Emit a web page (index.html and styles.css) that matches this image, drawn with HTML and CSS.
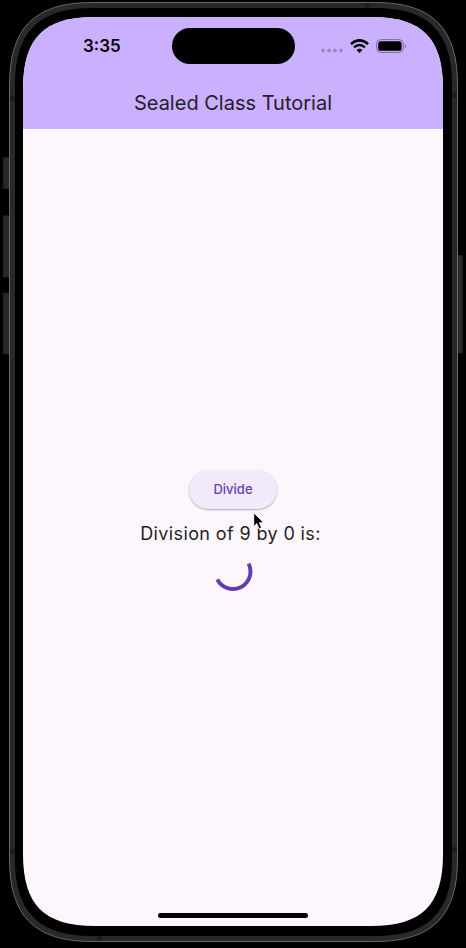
FILE: index.html
```
<!DOCTYPE html>
<html lang="en">
<head>
<meta charset="utf-8">
<title>Sealed Class Tutorial</title>
<link rel="stylesheet" href="styles.css">
</head>
<body>
<div class="device">
  <svg class="frame" viewBox="0 0 466 948" aria-hidden="true">
    <g fill="#292929" stroke="#202020">
      <rect x="3.2" y="157.5" width="7" height="31"/>
      <rect x="3.2" y="216" width="7" height="61"/>
      <rect x="3.2" y="293" width="7" height="61"/>
      <rect x="457" y="255.5" width="5.3" height="97.5"/>
    </g>
    <path fill="#292929" stroke="#686868" d="M9.500 84.500C9.500 28 35 2.500 91.500 2.500H375.500C432 2.500 457.500 28 457.500 84.500V859.500C457.500 916 432 941.500 375.500 941.500H91.500C35 941.500 9.500 916 9.500 859.500Z"/>
    <path fill="#1d1d1d" d="M10 96h5v5h-5zM10 849h5v5h-5zM365 3h5v5h-5zM452 93h5v5h-5zM452 847h5v5h-5zM97 936h5v5h-5z"/>
    <path fill="#000" d="M15 84C15 32 39 8 91 8H376C428 8 452 32 452 84V860C452 912 428 936 376 936H91C39 936 15 912 15 860Z"/>
  </svg>
  <main class="screen">
    <header class="app-bar">
      <div class="status-bar">
        <span class="time">3:35</span>
        <span class="island"></span>
        <span class="status-icons">
          <svg width="22" height="5" viewBox="0 0 22 5" fill="#a088c8"><circle cx="2" cy="2.5" r="2"/><circle cx="8" cy="2.500" r="2"/><circle cx="14" cy="2.500" r="2"/><circle cx="20" cy="2.500" r="2"/></svg>
          <svg class="wifi" width="19" height="14" viewBox="0 0 19 14"><g fill="none" stroke="#000" stroke-width="2.500"><path d="M.9 5.100Q9.500-2.400 18.100 5.100"/><path d="M4 8.400Q9.500 3.700 15 8.400"/></g><path d="M6.500 11Q9.500 8.600 12.500 11L9.500 14Z"/></svg>
          <svg class="battery" width="31" height="14" viewBox="0 0 31 14"><rect x=".6" y=".6" width="26.600" height="12.800" rx="4" fill="none" stroke="#7d6a9e"/><rect x="2.200" y="2.200" width="23.400" height="9.600" rx="2.600"/><path d="M28.800 4.800Q31.300 7 28.800 9.200Z" fill="#7d6a9e"/></svg>
        </span>
      </div>
      <h1 class="title">Sealed Class Tutorial</h1>
    </header>
    <section class="content">
      <button class="divide">Divide</button>
      <p class="message">Division of 9 by 0 is:</p>
      <svg class="spinner" width="40" height="40" viewBox="0 0 40 40"><path d="M35.600 9.700A17.200 17.200 0 1 1 4.300 25.300" fill="none" stroke="#613bb3" stroke-width="3.900"/></svg>
    </section>
    <div class="home-indicator"></div>
  </main>
  <svg class="cursor" width="12" height="18" viewBox="0 0 12 18"><path d="M.7.8V14.700L3.800 11.700L6 16.900L8.600 15.800L6.400 10.800H11Z" stroke="#fff" stroke-width="1"/></svg>
</div>
</body>
</html>
```
FILE: styles.css
```
* { box-sizing: border-box; }
body {
  margin: 0;
  background: #000;
  font-family: Inter, "Liberation Sans", sans-serif;
}
.device {
  position: relative;
  width: 466px;
  height: 948px;
  padding: 17px 23px 22px;
  overflow: hidden;
}
.frame {
  position: absolute;
  inset: 0;
  width: 466px;
  height: 948px;
}
.screen {
  position: relative;
  display: flex;
  flex-direction: column;
  width: 420px;
  height: 909px;
  background: #fdf7fd;
  clip-path: path("M0 72C0 21 21 0 72 0H348C399 0 420 21 420 72V837C420 888 399 909 348 909H72C21 909 0 888 0 837Z");
}
.app-bar {
  height: 112px;
  background: #cab0fe;
}
.status-bar {
  display: grid;
  grid-template-columns: 148.500px 123px 148.500px;
  align-items: center;
  height: 58px;
}
.time {
  padding-left: 60px;
  font-size: 17px;
  font-weight: 600;
  line-height: 20px;
}
.island {
  height: 36px;
  border-radius: 18px;
  background: #000;
}
.status-icons {
  display: flex;
  align-items: center;
  padding-left: 26.500px;
}
.status-icons svg { flex: none; }
.status-icons svg:first-child { margin-top: 8px; }
.wifi { margin: -1px 0 0 7px; }
.battery { margin: -1px 0 0 7px; }
.title {
  margin: 14px 0 0;
  text-align: center;
  font-size: 20px;
  font-weight: 400;
  line-height: 28px;
  color: #241e2b;
}
.content {
  display: flex;
  flex-direction: column;
  align-items: center;
  padding-top: 341px;
}
.divide {
  width: 88px;
  height: 39px;
  padding: 0;
  border: 0;
  border-radius: 20px;
  background: #f2eafa;
  box-shadow: 0 1px 2px rgba(0, 0, 0, .3);
  color: #6740b4;
  font: 500 13px/39px Inter, sans-serif;
}
.message {
  margin: 11px 0 0;
  padding-right: 5px;
  font-size: 18px;
  line-height: 28px;
  letter-spacing: .38px;
  color: #241f27;
  white-space: nowrap;
}
.spinner { margin-top: 6px; }
.home-indicator {
  width: 150px;
  height: 5px;
  margin: auto auto 8px;
  border-radius: 3px;
  background: #000;
}
.cursor {
  position: absolute;
  left: 253px;
  top: 512px;
}
```
